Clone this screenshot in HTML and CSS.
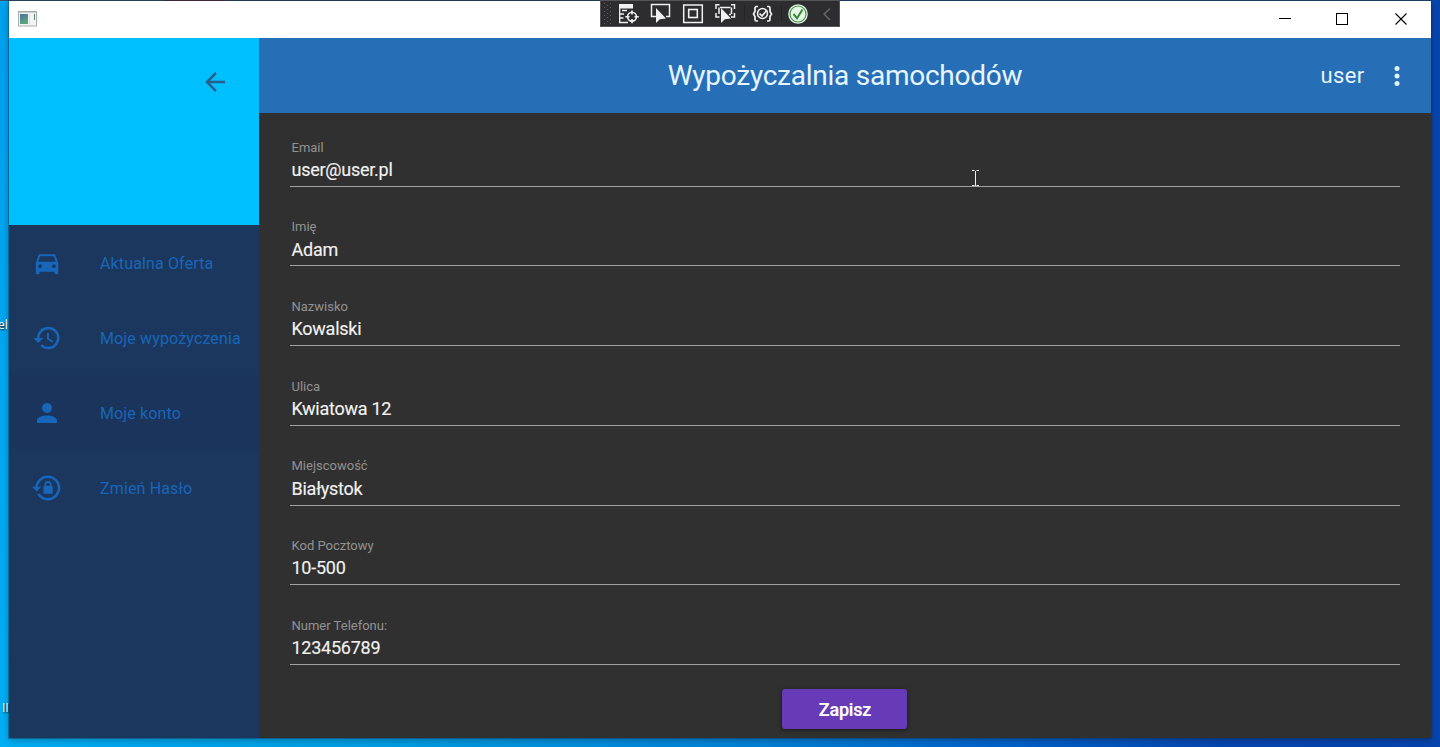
FILE: index.html
```html
<!DOCTYPE html>
<html lang="pl">
<head>
<meta charset="utf-8">
<title>Wypożyczalnia samochodów</title>
<link rel="stylesheet" href="styles.css">
</head>
<body>
<div class="desktop">
  <span class="desk-label desk-label-top">el</span>
  <span class="desk-label desk-label-bottom">II</span>
  <main class="window">
    <div class="titlebar">
      <svg class="app-icon" width="19" height="16" viewBox="0 0 19 16"><rect x=".5" y=".5" width="18" height="14.5" fill="#f4f4f4" stroke="#a5adad"/><path d="M1 1.5h17" stroke="#c7cccc"/><defs><linearGradient id="app" x2="0.4" y2="1"><stop stop-color="#4673a0"/><stop offset="1" stop-color="#5ba678"/></linearGradient></defs><rect x="2" y="3" width="8" height="10" fill="url(#app)"/><path d="M11.500 3v10" stroke="#dedede"/><path d="M16.500 3v6" stroke="#57886f"/></svg>
      <div class="window-buttons">
        <svg width="58" height="36" viewBox="0 0 58 36"><path d="M23 17.500h12" stroke="#000"/></svg>
        <svg width="58" height="36" viewBox="0 0 58 36"><rect x="23.500" y="12.500" width="11" height="11" fill="none" stroke="#000"/></svg>
        <svg width="58" height="36" viewBox="0 0 58 36"><path d="M23.500 12.500l11 11M34.500 12.500l-11 11" stroke="#000" stroke-width="1.100"/></svg>
      </div>
    </div>
    <div class="body">
      <aside class="sidebar">
        <div class="sidebar-head">
          <svg width="30" height="30" viewBox="0 0 24 24" fill="#28608c"><path d="M20 11v2H8l5.500 5.500-1.420 1.420L4.160 12l7.920-7.920L13.500 5.500 8 11z"/></svg>
        </div>
        <nav class="menu">
          <a class="menu-item"><svg viewBox="0 0 24 24"><path d="M5 11l1.500-4.500h11L19 11m-1.500 5a1.500 1.500 0 110-3 1.500 1.500 0 010 3m-11 0a1.500 1.500 0 110-3 1.500 1.500 0 010 3M18.920 6c-.2-.58-.76-1-1.420-1h-11c-.66 0-1.220.42-1.420 1L3 12v8a1 1 0 001 1h1a1 1 0 001-1v-1h12v1a1 1 0 001 1h1a1 1 0 001-1v-8z"/></svg><span>Aktualna Oferta</span></a>
          <a class="menu-item"><svg viewBox="0 0 24 24"><path d="M13.500 8H12v5l4.280 2.540.72-1.210-3.500-2.080zM13 3a9 9 0 00-9 9H1l3.960 4.030L9 12H6a7 7 0 117 7c-1.930 0-3.680-.79-4.940-2.060l-1.420 1.420A8.900 8.900 0 0013 21a9 9 0 000-18"/></svg><span>Moje wypożyczenia</span></a>
          <a class="menu-item selected"><svg viewBox="0 0 24 24"><path d="M12 4a4 4 0 110 8 4 4 0 010-8m0 10c4.420 0 8 1.790 8 4v2H4v-2c0-2.210 3.580-4 8-4"/></svg><span>Moje konto</span></a>
          <a class="menu-item"><svg viewBox="0 0 24 24"><path d="M12.630 2C18.160 2 22.640 6.500 22.640 12s-4.480 10-10.010 10c-3.500 0-6.580-1.820-8.370-4.570l1.580-1.250a8 8 0 10-1.170-5.180h2.800l-3.740 3.730L0 11h2.690c.5-5.050 4.760-9 9.940-9m2.960 8.240c.5.010.91.410.91.920v4.610c0 .5-.41.920-.92.920h-5.530c-.51 0-.92-.42-.92-.92v-4.610c0-.51.410-.91.910-.92v-1.010a2.770 2.770 0 115.550 0zm-2.770-2.490c-.83 0-1.500.67-1.500 1.480v1.010h2.990V9.230c0-.81-.66-1.480-1.490-1.480"/></svg><span>Zmień Hasło</span></a>
        </nav>
      </aside>
      <section class="content">
        <header class="appbar">
          <h1>Wypożyczalnia samochodów</h1>
          <div class="account"><span class="user">user</span><svg width="30" height="30" viewBox="0 0 24 24" fill="#e0f2ff"><circle cx="12" cy="6" r="2"/><circle cx="12" cy="12" r="2"/><circle cx="12" cy="18" r="2"/></svg></div>
        </header>
        <form class="form">
          <div class="field"><label>Email</label><div class="value">user@user.pl</div></div>
          <div class="field"><label>Imię</label><div class="value">Adam</div></div>
          <div class="field"><label>Nazwisko</label><div class="value">Kowalski</div></div>
          <div class="field"><label>Ulica</label><div class="value">Kwiatowa 12</div></div>
          <div class="field"><label>Miejscowość</label><div class="value">Białystok</div></div>
          <div class="field"><label>Kod Pocztowy</label><div class="value">10-500</div></div>
          <div class="field"><label>Numer Telefonu:</label><div class="value">123456789</div></div>
          <button class="save" type="button">Zapisz</button>
        </form>
      </section>
    </div>
  </main>
  <div class="debugbar">
    <svg width="240" height="27" viewBox="0 0 240 27" fill="none" stroke="#f0f0f0">
      <path d="M4.500 3v21M7.500 5v19M10.500 3v21" stroke="#5c5c60" stroke-dasharray="1 3"/>
      <path d="M19 4h14v4.500H19z" fill="#f0f0f0" stroke="none"/><path d="M19.700 4v19M19 14h5M19 18h4.500M19 22.500h9M22 10.500h5" stroke-width="1.300"/>
      <circle cx="32" cy="16.700" r="6" fill="#2d2d30" stroke="none"/><circle cx="32" cy="16.700" r="4.400" stroke-width="1.600"/><path d="M32 10.500v4M32 19v4.300M25.300 16.700h4.200M34.500 16.700h4.300" stroke-width="1.600"/>
      <path d="M57 16.500h-5.500v-12h18v12H66" stroke-width="1.500"/><path d="M56 8v15l3.800-3.800 6.200-.7z" fill="#f0f0f0" stroke="none"/>
      <rect x="83.700" y="5" width="18.600" height="17.500" stroke-width="1.500"/><rect x="88.700" y="9.500" width="8.600" height="8" stroke-width="1.600"/>
      <path d="M116 9V4.700h3.500M131 4.700h3.500V9M116 13v4h3.500M134.500 13v4H131M120 7.500h10.500M119 7.500v6.500M131.500 7.500v6.500M129 14.500h2" stroke-width="1.500"/><path d="M121 8v15l3.800-3.800 6.200-.7z" fill="#f0f0f0" stroke="none"/>
      <path d="M144.500 5v17M181.500 5v17" stroke="#242426"/>
      <path d="M158 6.500h-1.500q-1.500 0-1.500 2v3l-1.500 2.500 1.500 2.500v3q0 1.500 1.500 1.500h1.500M167 6.500h1.500q1.500 0 1.500 2v3l1.500 2.500-1.500 2.500v3q0 1.500-1.500 1.500H167" stroke-width="1.700"/><circle cx="162.500" cy="13.500" r="5" stroke-width="1.500"/><path d="M159.500 13.500l2.500 2.500 5-6" stroke-width="1.700"/>
      <circle cx="198" cy="14" r="9.800" fill="#e7f5e7" stroke="none"/><circle cx="198" cy="14" r="8" stroke="#419446" stroke-width="1.200"/><path d="M193.500 14l3.500 4.200 5.500-8.700" stroke="#388a3c" stroke-width="2"/>
      <path d="M230 8.500l-6 5.500 6 6" stroke="#6b6b6f" stroke-width="1.300"/>
    </svg>
  </div>
  <svg class="cursor" width="9" height="17" viewBox="0 0 9 17" fill="none" stroke="#eee"><path d="M1 .5h2.500M5.500.5H8M4.500 1v15M1 15.500h2.500M5.500 15.500H8"/></svg>
</div>
</body>
</html>
```
FILE: styles.css
```css
* { box-sizing: border-box; }
body { margin: 0; overflow: hidden; font-family: Roboto, "Liberation Sans", sans-serif; }
.desktop {
  position: relative;
  width: 1440px;
  height: 747px;
  padding: 1px 9px 9px;
  background:
    linear-gradient(90deg, #315168 0 165px, #652126 165px 225px, #30465a 225px 600px, #204a73 600px 1430px, transparent 1430px) 0 0 / 100% 1px no-repeat,
    linear-gradient(180deg, #00a0ed, #00aef3) 0 0 / 9px 100% no-repeat,
    linear-gradient(90deg, #00aef3 0, #009ce3 400px, #0080d5 760px, #0065cc 980px, #0645b0 1230px, #0745ad 100%);
}
.window {
  display: flex;
  flex-direction: column;
  height: 737px;
  background: #303030;
  box-shadow: 0 0 0 1px rgba(20, 50, 80, .4), 0 2px 7px rgba(0, 0, 0, .3);
}
.titlebar { display: flex; height: 37px; flex: none; justify-content: space-between; background: #fff; }
.app-icon { margin: 10px 0 0 9px; }
.window-buttons { display: flex; margin-right: 1px; }
.window-buttons svg { flex: none; }
.window-buttons svg:first-child { margin-right: -0.5px; }
.window-buttons svg:last-child { margin-left: 1px; }
.body { display: flex; flex: 1; min-height: 0; }
.sidebar { width: 250px; flex: none; background: #1c375e; }
.sidebar-head { display: flex; justify-content: flex-end; height: 187px; padding: 29px 29px 0 0; background: #00bfff; }
.menu-item { display: flex; align-items: center; height: 75px; padding-left: 23px; color: #1766ba; font-size: 16px; letter-spacing: .14px; }
.menu-item svg { width: 30px; height: 30px; margin-right: 38px; fill: currentColor; }
.menu-item span { padding-top: 2px; }
.menu-item.selected { background: #1b345b; }
.content { display: flex; flex: 1; flex-direction: column; }
.appbar { display: grid; grid-template-columns: 1fr auto 1fr; align-items: center; height: 75px; padding-right: 19px; padding-left: 19px; background: #266eb6; color: #e6f5ff; }
h1 { grid-column: 2; margin: 0; font-size: 28px; font-weight: 400; letter-spacing: -.25px; }
.account { display: flex; align-items: center; justify-content: flex-end; gap: 17.500px; }
.user { font-size: 22px; letter-spacing: .35px; }
.form { display: flex; flex-direction: column; padding: 0 31px; }
.field {
  height: 79.670px;
  padding: 25.800px 1px 0 1.500px;
  background: linear-gradient(#a2a2a2, #a2a2a2) 0 73px / 100% 1px no-repeat;
}
.field:nth-child(2) { background-position-y: 72.500px; }
label { display: block; height: 17.200px; color: #929292; font-size: 13px; line-height: 17px; }
.value { height: 28px; color: #f1f1f1; font-size: 18px; line-height: 28px; letter-spacing: -.25px; -webkit-text-stroke: .15px #f1f1f1; }
.save { align-self: center; width: 125px; height: 40px; margin: 18px 1px 0 0; padding: 2px 0 0 1px; border: 0; border-radius: 3px; background: #673ab7; color: #fff; font: 500 18px Roboto, sans-serif; letter-spacing: -.2px; -webkit-text-stroke: .2px #fff; box-shadow: 0 1px 4px rgba(0, 0, 0, .5); }
.debugbar { position: absolute; top: 0; left: 600px; width: 240px; height: 27px; background: #2d2d30; box-shadow: inset 0 0 0 1px #555558; }
.debugbar svg { display: block; }
.cursor { position: absolute; left: 971px; top: 170px; }
.desk-label { position: absolute; left: 0; width: 9px; overflow: hidden; color: #fff; font: 12px "Open Sans", sans-serif; text-shadow: 1px 1px 2px #000; }
.desk-label-top { top: 316px; left: -2px; }
.desk-label-bottom { top: 699px; left: 2px; width: 7px; }
```
